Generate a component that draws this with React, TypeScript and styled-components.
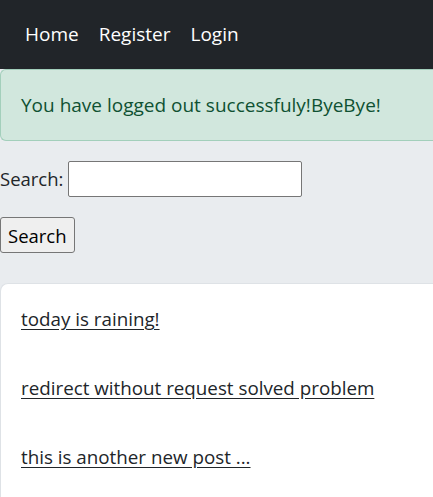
import React, { useState } from 'react';
import styled, { createGlobalStyle } from 'styled-components';

const GlobalStyle = createGlobalStyle`
  html, body {
    margin: 0;
    padding: 0;
    background: #e9ecef;
    color: #212529;
    font-family: 'Open Sans', 'Noto Sans', sans-serif;
    font-size: 20px;
    line-height: 1.5;
    overflow: hidden;
  }
`;

const NavBar = styled.nav`
  height: 69px;
  padding: 0 15px;
  display: flex;
  align-items: center;
  background: #212529;
`;

const NavLink = styled.a`
  padding: 0 10px;
  color: #ffffff;
  text-decoration: none;
  font-size: 19px;
  cursor: pointer;
`;

const Alert = styled.div`
  box-sizing: border-box;
  width: 100%;
  padding: 20px;
  border: 1px solid #a3cfbb;
  border-right: none;
  border-radius: 6px 0 0 6px;
  background: #d1e7dd;
  color: #0f5132;
  font-size: 19px;
  line-height: 30px;
  white-space: nowrap;
`;

const SearchForm = styled.form`
  margin-top: 20px;
`;

const FieldRow = styled.div`
  display: flex;
  align-items: center;
  gap: 5px;
  height: 36px;
  font-size: 18.5px;
`;

const SearchInput = styled.input`
  box-sizing: border-box;
  width: 234px;
  height: 36px;
  border: 1px solid #767676;
  border-radius: 2px;
  background: #fff;
`;

const SearchButton = styled.button`
  margin-top: 20px;
  box-sizing: border-box;
  height: 36px;
  padding: 0 7px;
  border: 1px solid #767676;
  border-radius: 3px;
  background: #efefef;
  color: #000;
  font-family: inherit;
  font-size: 18.5px;
`;

const PostCard = styled.div`
  box-sizing: border-box;
  margin-top: 30px;
  width: 100%;
  padding: 1px 0 5px;
  background: #fff;
  border: 1px solid #dee2e6;
  border-right: none;
  border-bottom: none;
  border-radius: 8px 0 0 0;
`;

const PostRow = styled.div`
  height: 69px;
  padding: 0 20px;
  display: flex;
  align-items: center;
`;

const PostLink = styled.a`
  color: #212529;
  text-decoration: underline;
  text-underline-offset: 3px;
  font-size: 18.8px;
  white-space: nowrap;
  cursor: pointer;
`;

const posts = [
  'today is raining!',
  'redirect without request solved problem',
  'this is another new post ...',
];

const App = () => {
  const [query, setQuery] = useState<string>('');

  return (
    <>
      <GlobalStyle />
      <NavBar>
        <NavLink>Home</NavLink>
        <NavLink>Register</NavLink>
        <NavLink>Login</NavLink>
      </NavBar>
      <Alert>You have logged out successfuly!ByeBye!</Alert>
      <SearchForm onSubmit={(e) => e.preventDefault()}>
        <FieldRow>
          <label htmlFor="q">Search:</label>
          <SearchInput id="q" value={query} onChange={(e) => setQuery(e.target.value)} />
        </FieldRow>
        <SearchButton type="submit">Search</SearchButton>
      </SearchForm>
      <PostCard>
        {posts.map((title) => (
          <PostRow key={title}>
            <PostLink>{title}</PostLink>
          </PostRow>
        ))}
      </PostCard>
    </>
  );
};

export default App;
